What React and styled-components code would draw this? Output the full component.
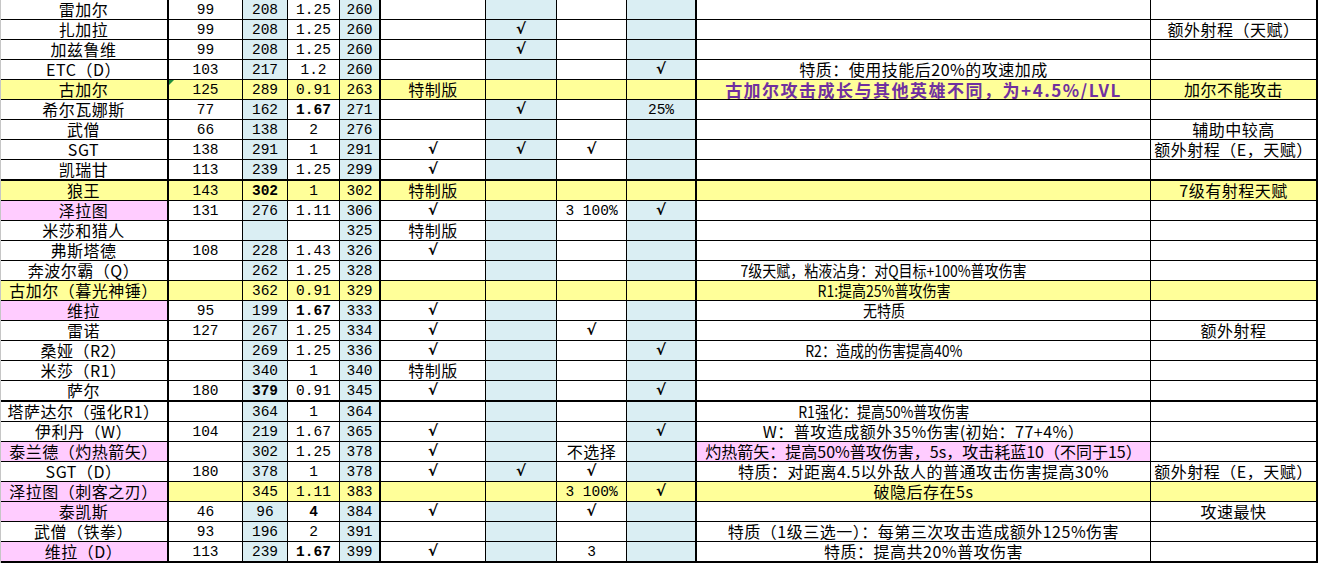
import React from "react"
import styled, { createGlobalStyle } from "styled-components"

const GlobalStyle = createGlobalStyle`
  html, body {
    margin: 0;
    padding: 0;
    background: #ffffff;
  }
`

const COLS = "169px 74px 45px 52px 41px 105px 71px 70px 70px 454px 167px"
const THICK_COLS = [0, 4, 8, 10]
const BLUE_COLS = [2, 4, 6, 8]

const BG = {
  white: "#ffffff",
  blue: "#daeef3",
  yellow: "#ffff99",
  pink: "#ffccff",
}

const Sheet = styled.div`
  display: flex;
  flex-direction: column;
  width: 1318px;
  border-left: 1px solid #c6c6c6;
  box-sizing: border-box;
  overflow: hidden;
`

const Row = styled.div`
  display: grid;
  grid-template-columns: ${COLS};
  height: ${(p) => (p.$thick ? 21 : 20)}px;
  border-bottom: ${(p) => (p.$thick ? 2 : 1)}px solid #000;
  box-sizing: border-box;
  margin-left: -1px;
`

const Cell = styled.div`
  position: relative;
  height: 19px;
  background: ${(p) => BG[p.$bg]};
  border-right: ${(p) => (p.$wide ? 2 : 1)}px solid #000;
  box-sizing: border-box;
  overflow: hidden;
  white-space: nowrap;
  text-align: center;
  color: #000;
  line-height: 19px;
`

const Flag = styled.span`
  position: absolute;
  left: 0;
  top: 0;
  width: 0;
  height: 0;
  border-top: 5px solid #1e8c3a;
  border-right: 5px solid transparent;
`

const Num = styled.span`
  display: inline-block;
  height: 19px;
  line-height: 20px;
  vertical-align: top;
  font-family: "Liberation Mono", "DejaVu Sans Mono", monospace;
  font-size: 14.5px;
  font-weight: ${(p) => (p.$bold ? 700 : 400)};
  white-space: pre;
`

const Check = styled.span`
  display: inline-block;
  height: 19px;
  line-height: 19px;
  vertical-align: top;
  font-family: "DejaVu Sans", sans-serif;
  font-size: 15px;
  font-weight: 700;
  font-style: italic;
`

const Text = styled.span`
  display: inline-block;
  height: 19px;
  line-height: 19px;
  vertical-align: top;
  font-family: "Noto Sans CJK SC", "Noto Sans", sans-serif;
  font-size: ${(p) => p.$size || 16}px;
  letter-spacing: ${(p) => (p.$ls === undefined ? 0.5 : p.$ls)}px;
  font-weight: ${(p) => (p.$bold ? 700 : 400)};
  color: ${(p) => p.$color || "#000"};
  margin-right: ${(p) => p.$pr || 0}px;
  transform: scaleX(${(p) => p.$sx || 1});
`

const V = "√"

// j: style of the note column — "small" (condensed, shifted left), "purple", "tight"
const rows = [
  { c: ["雷加尔", "99", "208", "1.25", "260", "", "", "", "", "", ""] },
  { c: ["扎加拉", "99", "208", "1.25", "260", "", V, "", "", "", "额外射程（天赋）"] },
  { c: ["加兹鲁维", "99", "208", "1.25", "260", "", V, "", "", "", ""] },
  { c: ["ETC（D）", "103", "217", "1.2", "260", "", "", "", V, "特质：使用技能后20%的攻速加成", ""] },
  {
    c: ["古加尔", "125", "289", "0.91", "263", "特制版", "", "", "", "古加尔攻击成长与其他英雄不同，为+4.5%/LVL", "加尔不能攻击"],
    bg: "yellow",
    j: "purple",
    flag: true,
  },
  { c: ["希尔瓦娜斯", "77", "162", "1.67", "271", "", V, "", "25%", "", ""], bold: [3] },
  { c: ["武僧", "66", "138", "2", "276", "", "", "", "", "", "辅助中较高"] },
  { c: ["SGT", "138", "291", "1", "291", V, V, V, "", "", "额外射程（E，天赋）"] },
  { c: ["凯瑞甘", "113", "239", "1.25", "299", V, "", "", "", "", ""], thick: true },
  { c: ["狼王", "143", "302", "1", "302", "特制版", "", "", "", "", "7级有射程天赋"], bg: "yellow", bold: [2] },
  { c: ["泽拉图", "131", "276", "1.11", "306", V, "", "3 100%", V, "", ""], a: "pink" },
  { c: ["米莎和猎人", "", "", "", "325", "特制版", "", "", "", "", ""] },
  { c: ["弗斯塔德", "108", "228", "1.43", "326", V, "", "", "", "", ""] },
  { c: ["奔波尔霸（Q）", "", "262", "1.25", "328", "", "", "", "", "7级天赋，粘液沾身：对Q目标+100%普攻伤害", ""], j: "small" },
  { c: ["古加尔（暮光神锤）", "", "362", "0.91", "329", "", "", "", "", "R1:提高25%普攻伤害", ""], bg: "yellow", j: "small" },
  { c: ["维拉", "95", "199", "1.67", "333", V, "", "", "", "无特质", ""], a: "pink", bold: [3], j: "small" },
  { c: ["雷诺", "127", "267", "1.25", "334", V, "", V, "", "", "额外射程"] },
  { c: ["桑娅（R2）", "", "269", "1.25", "336", V, "", "", V, "R2：造成的伤害提高40%", ""], j: "small" },
  { c: ["米莎（R1）", "", "340", "1", "340", "特制版", "", "", "", "", ""] },
  { c: ["萨尔", "180", "379", "0.91", "345", V, "", "", V, "", ""], bold: [2], thick: true },
  { c: ["塔萨达尔（强化R1）", "", "364", "1", "364", "", "", "", "", "R1强化：提高50%普攻伤害", ""], j: "small" },
  { c: ["伊利丹（W）", "104", "219", "1.67", "365", V, "", "", V, "W：普攻造成额外35%伤害(初始：77+4%）", ""] },
  {
    c: ["泰兰德（灼热箭矢）", "", "302", "1.25", "378", V, "", "不选择", "", "灼热箭矢：提高50%普攻伤害，5s，攻击耗蓝10（不同于15）", ""],
    a: "pink",
    jBg: "pink",
    j: "tight",
  },
  { c: ["SGT（D）", "180", "378", "1", "378", V, V, V, "", "特质：对距离4.5以外敌人的普通攻击伤害提高30%", "额外射程（E，天赋）"] },
  { c: ["泽拉图（刺客之刃）", "", "345", "1.11", "383", "", "", "3 100%", V, "破隐后存在5s", ""], a: "pink", bg: "yellow" },
  { c: ["泰凯斯", "46", "96", "4", "384", V, "", V, "", "", "攻速最快"], a: "pink", bold: [3] },
  { c: ["武僧（铁拳）", "93", "196", "2", "391", "", "", "", "", "特质（1级三选一）：每第三次攻击造成额外125%伤害", ""] },
  { c: ["维拉（D）", "113", "239", "1.67", "399", V, "", "3", "", "特质：提高共20%普攻伤害", ""], a: "pink", bold: [3], thick: true },
]

const cellBg = (row, i) => {
  if (i === 0 && row.a) return row.a
  if (i === 9 && row.jBg) return row.jBg
  if (row.bg) return row.bg
  return BLUE_COLS.includes(i) ? "blue" : "white"
}

const isNumeric = (s) => /^[\d.\s%]+$/.test(s)

const Content = ({ value, col, row }) => {
  if (!value) return null
  if (value === V) return <Check>{V}</Check>
  if (isNumeric(value)) return <Num $bold={row.bold && row.bold.includes(col)}>{value}</Num>
  if (col === 9 && row.j === "purple")
    return (
      <Text $size={17} $ls={1.5} $bold $color="#7030a0">
        {value}
      </Text>
    )
  if (col === 9 && row.j === "small")
    return (
      <Text $size={16} $ls={0} $pr={79} $sx={0.875}>
        {value}
      </Text>
    )
  if (col === 9 && row.j === "tight") return <Text $ls={0}>{value}</Text>
  return <Text>{value}</Text>
}

const App = () => (
  <>
    <GlobalStyle />
    <Sheet>
      {rows.map((row, r) => (
        <Row key={r} $thick={row.thick}>
          {row.c.map((value, i) => (
            <Cell key={i} $bg={cellBg(row, i)} $wide={THICK_COLS.includes(i)}>
              {row.flag && i === 1 && <Flag />}
              <Content value={value} col={i} row={row} />
            </Cell>
          ))}
        </Row>
      ))}
    </Sheet>
  </>
)

export default App
